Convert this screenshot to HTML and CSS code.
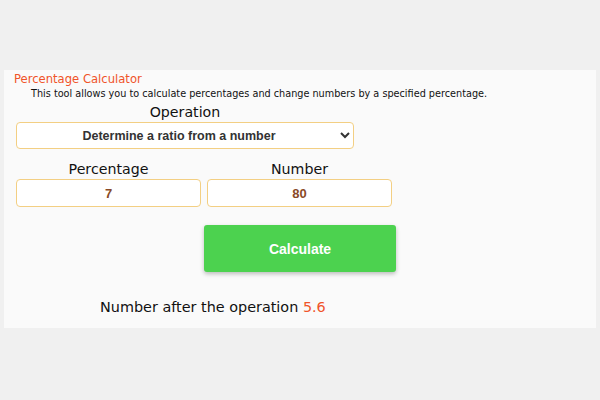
FILE: index.html
```html
<!DOCTYPE html>
<html lang="en">
  <head>
    <meta charset="UTF-8" />
    <meta name="viewport" content="width=device-width, initial-scale=1.0" />
    <title>Percentage Calculator</title>
    <link rel="stylesheet" href="styles.css">
  </head>
  <body>
    <div class="panel">
      <h2 class="title">Percentage Calculator</h2>
      <p class="intro">This tool allows you to calculate percentages and change numbers by a specified percentage.</p>

      <div class="op-group">
        <label for="operacao">Operation</label>
        <select id="operacao">
          <option>Determine a ratio from a number</option>
        </select>
      </div>

      <div class="fields">
        <div class="field">
          <label for="percentagem">Percentage</label>
          <input type="text" id="percentagem" value="7" />
        </div>
        <div class="field">
          <label for="numero">Number</label>
          <input type="text" id="numero" value="80" />
        </div>
      </div>

      <div class="actions">
        <button class="calcular">Calculate</button>
      </div>

      <p class="resultado">Number after the operation <span class="valor">5.6</span></p>
    </div>
  </body>
</html>
```

FILE: styles.css
```css
body {
  font-family: "Comic Sans MS", "DejaVu Sans", sans-serif;
  background-color: #f0f0f0;
  margin: 0;
  padding: 70px 4px 0;
}

.panel {
  background-color: #fafafa;
  height: 258px;
  box-sizing: border-box;
  padding: 1px 0 0;
}

.title {
  font-size: 11.6px;
  font-weight: normal;
  color: #f0542a;
  margin: 0 0 0 10px;
  line-height: 16px;
}

.intro {
  font-size: 9.7px;
  color: #111;
  margin: 0 0 0 27px;
  line-height: 14px;
}

label {
  display: block;
  text-align: center;
  font-size: 14.2px;
  color: #111;
  line-height: 20px;
}

.op-group {
  width: 338px;
  margin: 1px 0 0 12px;
}

select {
  display: block;
  width: 100%;
  height: 27px;
  border: 1px solid #f3cf83;
  border-radius: 4px;
  background-color: #fff;
  font-family: "Liberation Sans", Arial, sans-serif;
  font-size: 12.5px;
  font-weight: bold;
  color: #333;
  text-align: center;
  text-align-last: center;
}

.fields {
  display: flex;
  gap: 6px;
  margin: 10px 0 0 12px;
}

.field {
  width: 185px;
}

input[type="text"] {
  display: block;
  width: 100%;
  height: 28px;
  box-sizing: border-box;
  border: 1px solid #f3cf83;
  border-radius: 4px;
  background-color: #fff;
  font-family: "Liberation Sans", Arial, sans-serif;
  font-size: 13px;
  font-weight: bold;
  color: #8a4a26;
  text-align: center;
}

.actions {
  display: flex;
  justify-content: center;
  margin-top: 18px;
}

button.calcular {
  width: 192px;
  height: 47px;
  border: none;
  border-radius: 3px;
  background-color: #4cd24f;
  color: #fff;
  font-family: "Liberation Sans", Arial, sans-serif;
  font-size: 14px;
  font-weight: bold;
  cursor: pointer;
  box-shadow: 0 2px 4px rgba(0, 0, 0, 0.25);
}

.resultado {
  font-size: 14.4px;
  color: #111;
  margin: 24px 0 0 96px;
  line-height: 22px;
}

.valor {
  color: #f0542a;
}
```
